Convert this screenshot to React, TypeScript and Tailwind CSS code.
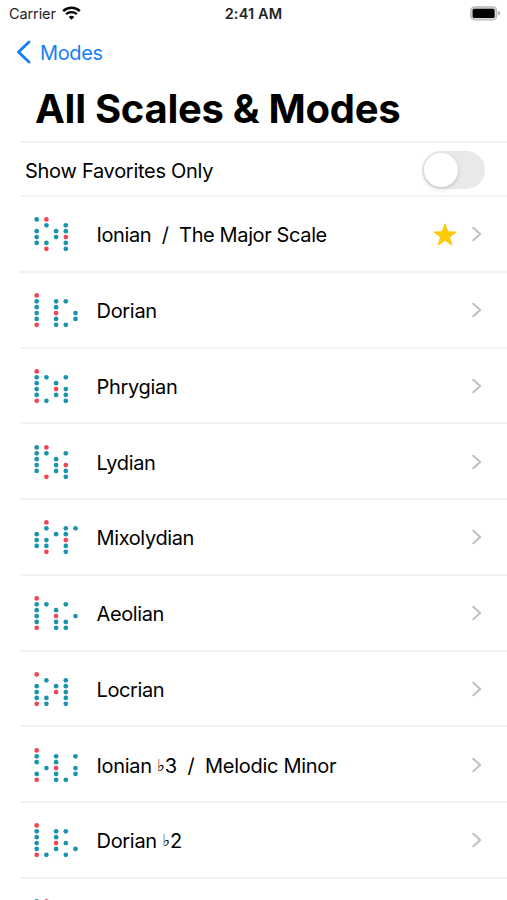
import React from "react";

type Scale = { name: string; accidental?: string; tail?: string; dots: string[]; favorite?: boolean; spacing: string };

const SCALES: Scale[] = [
  { name: "Ionian  /  The Major Scale", favorite: true, spacing: "tracking-[-0.38px]", dots: ["BR...", ".B.B.", "B.BB.", "B.BR.", "BB.B.", ".R.B."] },
  { name: "Dorian", spacing: "tracking-[-0.3px]", dots: ["R....", "B.BB.", "B.B..", "B.R.B", "B.B.B", "R.BB."] },
  { name: "Phrygian", spacing: "tracking-[-0.3px]", dots: ["R....", "BB.B.", "B.B..", "B.RB.", "B.BB.", "RB.B."] },
  { name: "Lydian", spacing: "tracking-[-0.3px]", dots: ["BR...", "BB.B.", "B.B..", "B.BR.", "B.BB.", ".R.B."] },
  { name: "Mixolydian", spacing: "tracking-[-0.38px]", dots: [".R...", ".B.BB", "B.BB.", "BB.R.", "BB.B.", ".R.B."] },
  { name: "Aeolian", spacing: "tracking-[-0.38px]", dots: ["R....", "BB.B.", "B.B..", "B.R.B", "B.BB.", "R.BB."] },
  { name: "Locrian", spacing: "tracking-[-0.38px]", dots: ["R....", ".B.B.", "B.BB.", "B.RB.", "BB.B.", "RB.B."] },
  { name: "Ionian ", accidental: "♭", tail: "3  /  Melodic Minor", spacing: "tracking-[-0.3px]", dots: ["R....", "B.B.B", "B.B..", ".BR.B", "B.B.B", "R.BB."] },
  { name: "Dorian ", accidental: "♭", tail: "2", spacing: "tracking-[-0.3px]", dots: ["R....", "B.BB.", "B.B..", "B.RB.", "B.B.B", "RB.B."] },
  { name: "", spacing: "", dots: ["BR..."] },
];

function DotPattern({ dots }: { dots: string[] }) {
  return (
    <svg className="h-[35px] w-[44px] shrink-0" viewBox="0 0 44 35" aria-hidden="true">
      {dots.flatMap((row, y) =>
        [...row].map((dot, x) =>
          dot === "." ? null : (
            <circle key={`${x}-${y}`} cx={2.7 + x * 9.7} cy={2.4 + y * 5.88} r="2.35" fill={dot === "R" ? "#f04457" : "#1a93ae"} />
          ),
        ),
      )}
    </svg>
  );
}

function Chevron() {
  return (
    <svg className="-mt-px h-[16px] w-[10px] shrink-0" viewBox="0 0 10 16" fill="none" aria-hidden="true">
      <path d="M1.3 1.8 8.2 8 1.3 14.2" stroke="#c2c2c5" strokeWidth="2.2" strokeLinecap="round" strokeLinejoin="round" />
    </svg>
  );
}

function StatusBar() {
  return (
    <header className="grid h-[28px] grid-cols-3 items-center pl-[9px] pr-[6px] text-[14.5px] leading-[28px] text-[#222]">
      <div className="flex items-center gap-[6px]">
        <span className="tracking-[-0.1px]">Carrier</span>
        <svg className="-mt-[2px] h-[15px] w-[19px]" viewBox="0 0 19 15" fill="none" stroke="#080808" aria-hidden="true">
          <path d="M1.2 5.1C5.8.7 13.2.7 17.8 5.1" strokeWidth="2.5" />
          <path d="M4.1 8.2c3-2.8 7.8-2.8 10.8 0" strokeWidth="2.4" />
          <path d="M6.7 10.9c1.6-1.4 4-1.4 5.6 0L9.5 13.8Z" fill="#080808" stroke="none" />
        </svg>
      </div>
      <div className="pr-[3px] text-center font-semibold tracking-[0.15px]">2:41 AM</div>
      <svg className="-mt-[2px] h-[15px] w-[31px] justify-self-end" viewBox="0 0 31 15" aria-hidden="true">
        <rect x=".8" y=".8" width="25.8" height="13.2" rx="4" fill="#d4d4d4" stroke="#b5b5b5" strokeWidth="1.2" />
        <rect x="2.6" y="2.8" width="22" height="9.2" rx="1.6" fill="#000" />
        <path d="M28 5.1c2.8.5 2.8 4 0 4.5Z" fill="#aaa" />
      </svg>
    </header>
  );
}

export default function App() {
  return (
    <main className="h-[900px] w-[507px] overflow-hidden bg-white font-['Inter','Noto_Sans',sans-serif] text-black">
      <StatusBar />
      <nav className="h-[48px] pl-[16px]">
        <button className="flex h-[48px] items-center gap-[9px] text-[#147efb]">
          <svg className="h-[24px] w-[15px]" viewBox="0 0 15 24" fill="none" aria-hidden="true">
            <path d="M13 2 2.5 12 13 22" stroke="currentColor" strokeWidth="2.9" strokeLinecap="round" strokeLinejoin="round" />
          </svg>
          <span className="pt-[2px] text-[20px] tracking-[-0.35px]">Modes</span>
        </button>
      </nav>
      <h1 className="h-[65px] whitespace-nowrap pl-[35px] text-[40px] font-bold leading-[65px] tracking-[-0.28px]">All Scales &amp; Modes</h1>
      <section className="ml-[20px]">
        <div className="flex h-[56px] items-center justify-between border-y-2 border-[#f2f2f3] pl-[5px] pr-[22px]">
          <span className="pt-[3px] text-[20px] tracking-[-0.28px]">Show Favorites Only</span>
          <button role="switch" aria-checked="false" aria-label="Show Favorites Only" className="mt-px flex h-[38px] w-[63px] items-center rounded-full bg-[#e9e9eb] p-[1.5px]">
            <span className="size-[34px] rounded-full bg-white shadow-[0_2px_5px_rgba(0,0,0,0.15)]" />
          </button>
        </div>
        <ul>
          {SCALES.map((scale, index) => (
            <li key={index} className="flex h-[75.75px] items-center border-b-2 border-[#f2f2f3] pl-[14px] pr-[25px] pt-[2px]">
              <DotPattern dots={scale.dots} />
              <span className={`ml-[18.5px] flex-1 whitespace-pre pt-px text-[20px] ${scale.spacing}`}>
                {scale.name}
                {scale.accidental && <span className="relative -top-[2px] font-['DejaVu_Sans',sans-serif] text-[17px] font-bold leading-none">{scale.accidental}</span>}
                {scale.tail}
              </span>
              {scale.favorite && (
                <svg className="mr-[15px] h-[24px] w-[24px]" viewBox="0 0 24 24" fill="#fecb08" aria-label="Favorite">
                  <path d="M12 .8 14.8 8.8 23.2 9 16.5 14.1 18.9 22.1 12 17.3 5.1 22.1 7.5 14.1.8 9 9.2 8.8Z" stroke="#fecb08" strokeWidth="1" strokeLinejoin="round" />
                </svg>
              )}
              <Chevron />
            </li>
          ))}
        </ul>
      </section>
    </main>
  );
}
